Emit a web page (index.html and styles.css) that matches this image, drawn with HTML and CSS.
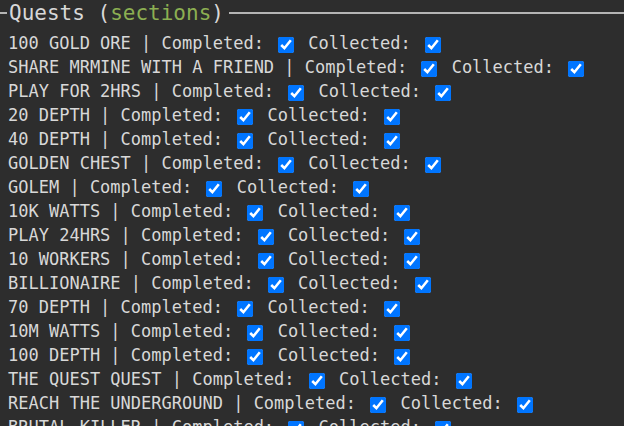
FILE: index.html
```html
<!DOCTYPE html>
<html lang="en">
<head>
<meta charset="utf-8">
<title>Quests</title>
<link rel="stylesheet" href="styles.css">
</head>
<body>
<fieldset class="quests">
  <legend class="quests-title">Quests (<span class="accent">sections</span>)</legend>
  <div class="row">100 GOLD ORE | Completed: <input type="checkbox" class="cb" checked> Collected: <input type="checkbox" class="cb" checked></div>
  <div class="row">SHARE MRMINE WITH A FRIEND | Completed: <input type="checkbox" class="cb" checked> Collected: <input type="checkbox" class="cb" checked></div>
  <div class="row">PLAY FOR 2HRS | Completed: <input type="checkbox" class="cb" checked> Collected: <input type="checkbox" class="cb" checked></div>
  <div class="row">20 DEPTH | Completed: <input type="checkbox" class="cb" checked> Collected: <input type="checkbox" class="cb" checked></div>
  <div class="row">40 DEPTH | Completed: <input type="checkbox" class="cb" checked> Collected: <input type="checkbox" class="cb" checked></div>
  <div class="row">GOLDEN CHEST | Completed: <input type="checkbox" class="cb" checked> Collected: <input type="checkbox" class="cb" checked></div>
  <div class="row">GOLEM | Completed: <input type="checkbox" class="cb" checked> Collected: <input type="checkbox" class="cb" checked></div>
  <div class="row">10K WATTS | Completed: <input type="checkbox" class="cb" checked> Collected: <input type="checkbox" class="cb" checked></div>
  <div class="row">PLAY 24HRS | Completed: <input type="checkbox" class="cb" checked> Collected: <input type="checkbox" class="cb" checked></div>
  <div class="row">10 WORKERS | Completed: <input type="checkbox" class="cb" checked> Collected: <input type="checkbox" class="cb" checked></div>
  <div class="row">BILLIONAIRE | Completed: <input type="checkbox" class="cb" checked> Collected: <input type="checkbox" class="cb" checked></div>
  <div class="row">70 DEPTH | Completed: <input type="checkbox" class="cb" checked> Collected: <input type="checkbox" class="cb" checked></div>
  <div class="row">10M WATTS | Completed: <input type="checkbox" class="cb" checked> Collected: <input type="checkbox" class="cb" checked></div>
  <div class="row">100 DEPTH | Completed: <input type="checkbox" class="cb" checked> Collected: <input type="checkbox" class="cb" checked></div>
  <div class="row">THE QUEST QUEST | Completed: <input type="checkbox" class="cb" checked> Collected: <input type="checkbox" class="cb" checked></div>
  <div class="row">REACH THE UNDERGROUND | Completed: <input type="checkbox" class="cb" checked> Collected: <input type="checkbox" class="cb" checked></div>
  <div class="row">BRUTAL KILLER | Completed: <input type="checkbox" class="cb" checked> Collected: <input type="checkbox" class="cb" checked></div>
</fieldset>
</body>
</html>
```
FILE: styles.css
```css
html {
  overflow: hidden;
  background: #2d2d2d;
}
body {
  margin: 0;
  background: #2d2d2d;
  color: #d8d8d8;
  font-family: "DejaVu Sans Mono", monospace;
  font-size: 17px;
}
.quests {
  margin: 0 -40px 0 0;
  border: none;
  border-top: 2px solid #b4b4b4;
  padding: 5px 0 0 8px;
  min-width: 0;
}
.quests-title {
  font-size: 21px;
  line-height: 26px;
  padding: 0 5px 0 2px;
  margin-left: -1px;
  color: #d8d8d8;
}
.accent {
  color: #8caf52;
}
.row {
  height: 24px;
  line-height: 24px;
  white-space: pre;
}
.cb {
  width: 16px;
  height: 16px;
  margin: 0 4px;
  vertical-align: -4px;
}
```
